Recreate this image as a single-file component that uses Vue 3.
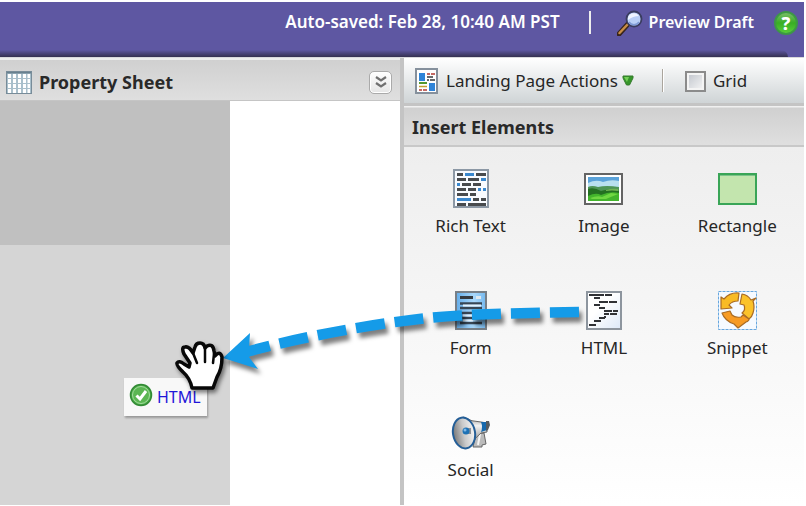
<script setup>
import { ref } from 'vue'

const grid = ref(false)
const elements = ['Rich Text', 'Image', 'Rectangle', 'Form', 'HTML', 'Snippet', 'Social']

const richBars = [
  [4, 4, 6, 0], [12, 4, 9, 1], [23, 4, 10, 0],
  [4, 9, 9, 0], [15, 9, 11, 0], [28, 9, 5, 1],
  [4, 14, 3, 1], [9, 14, 9, 0], [20, 14, 8, 0],
  [4, 19, 9, 0], [15, 19, 8, 0], [25, 19, 3, 1], [30, 19, 3, 1],
  [4, 24, 11, 0], [17, 24, 6, 0],
  [4, 29, 14, 1], [20, 29, 6, 0], [28, 29, 5, 0],
  [4, 34, 9, 0], [15, 34, 18, 0]
]
const htmlBars = [
  [3, 3, 15], [19, 3, 7], [8, 6, 6], [13, 10, 9], [23, 10, 8], [8, 13, 6],
  [13, 16, 6], [18, 19, 8], [27, 19, 5], [18, 22, 5], [24, 22, 7],
  [18, 25, 2], [13, 26, 6], [8, 29, 7], [3, 33, 7]
]
</script>

<template>
  <div class="app">
    <header class="topbar">
      <span class="saved">Auto-saved: Feb 28, 10:40 AM PST</span>
      <span class="bar-sep"></span>
      <a class="preview" href="#preview">
        <svg width="26" height="26" viewBox="0 0 26 26" aria-hidden="true">
          <path d="M2 24 11 14" stroke="#38251b" stroke-width="5" stroke-linecap="round" />
          <path d="M2.500 23 10.500 14.500" stroke="#c98d45" stroke-width="2.500" stroke-linecap="round" />
          <circle cx="17" cy="9" r="7.500" fill="#b9cff6" stroke="#3a3d60" stroke-width="1.800" />
          <path d="M11 10a6 6 0 0 1 11-4q-6 0-11 4" fill="#eff5ff" />
          <path d="M12 12a6 6 0 0 0 10 0" fill="none" stroke="#7f9bd6" stroke-width="1.500" />
        </svg>
        <span>Preview Draft</span>
      </a>
      <button class="help" type="button" aria-label="Help">?</button>
    </header>

    <main class="work">
      <section class="left">
        <div class="panel-head">
          <svg width="26" height="23" viewBox="0 0 26 23" aria-hidden="true">
            <rect x=".5" y=".5" width="25" height="22" fill="#a9bfcb" stroke="#788c99" />
            <path d="M3.500 3v19M8.500 3v19M13.500 3v19M18.500 3v19M22.500 3v19" stroke="#fff" stroke-width="3" />
            <path d="M1 7.500h24M1 12.500h24M1 17.500h24M6 3v19M11 3v19M16 3v19M21 3v19" stroke="#a9bfcb" />
            <path d="M1 1.500h24" stroke="#68808f" stroke-width="2" />
            <rect x=".5" y=".5" width="25" height="22" fill="none" stroke="#788c99" />
          </svg>
          <h2>Property Sheet</h2>
          <button class="collapse" type="button" aria-label="Collapse">
            <svg width="14" height="16" viewBox="0 0 14 16" aria-hidden="true">
              <path d="m2 3 5 3.500L12 3M2 9l5 3.500L12 9" fill="none" stroke="#707070" stroke-width="2.200" />
            </svg>
          </button>
        </div>
        <div class="canvas">
          <div class="page">
            <div class="block"></div>
          </div>
          <div class="drag">
            <svg width="24" height="24" viewBox="0 0 24 24" aria-hidden="true">
              <circle cx="12" cy="12" r="10.500" fill="#4fae49" stroke="#328a35" stroke-width="1.500" />
              <circle cx="12" cy="12" r="8.500" fill="#5bb653" stroke="#a5dda0" />
              <path d="m7.500 12.500 3.500 3.500 6-8" fill="none" stroke="#fff" stroke-width="3" />
            </svg>
            <span>HTML</span>
          </div>
        </div>
      </section>

      <section class="right">
        <div class="toolbar">
          <button class="actions" type="button">
            <svg width="23" height="26" viewBox="0 0 23 26" aria-hidden="true">
              <rect x="1" y="1" width="21" height="24" fill="#fff" stroke="#85909c" stroke-width="2" />
              <path d="M4 5h6v8H4zM14 15h6v8h-6z" fill="#2f84d8" />
              <path d="M12 6h3M16 6h4M4 22h3M8 22h4" stroke="#b33a32" stroke-width="1.500" />
              <path d="M12 9h6M12 12h2M15 12h5" stroke="#363a3d" stroke-width="1.500" />
              <path d="M4 15h8" stroke="#55982e" stroke-width="2" />
              <path d="M4 18.500h8" stroke="#c6a12f" stroke-width="1.500" />
            </svg>
            <span>Landing Page Actions</span>
            <svg width="12" height="11" viewBox="0 0 12 11" aria-hidden="true">
              <path d="M1 1h10v2L7.500 10h-3L1 3z" fill="#36962b" stroke="#347b2d" />
              <path d="M2 2h5L5 7z" fill="#74cf57" />
            </svg>
          </button>
          <span class="tool-sep"></span>
          <label class="grid-toggle"><input v-model="grid" type="checkbox" /><span>Grid</span></label>
        </div>
        <h2 class="insert-head">Insert Elements</h2>
        <div class="palette">
          <button v-for="name in elements" :key="name" class="tile" type="button">
            <span class="pic">
              <svg v-if="name === 'Rich Text'" width="36" height="39" viewBox="0 0 36 39" aria-hidden="true">
                <rect x="1" y="1" width="34" height="37" fill="#f8fbff" stroke="#8c98a5" stroke-width="2" />
                <rect v-for="(b, i) in richBars" :key="i" :x="b[0]" :y="b[1]" :width="b[2]" height="3" :fill="b[3] ? '#3a88ce' : '#484b4e'" />
              </svg>
              <svg v-else-if="name === 'Image'" width="39" height="32" viewBox="0 0 39 32" aria-hidden="true">
                <rect x="1" y="1" width="37" height="30" fill="#fff" stroke="#646464" stroke-width="2" />
                <rect x="4" y="4" width="31" height="24" fill="#5aa2d9" />
                <path d="M4 10q8-4 15-1 8-3 16-1v7H4z" fill="#b9e0ef" />
                <path d="M4 14q4-2 10 0 8-2 21 0v14H4z" fill="#4e9556" />
                <path d="M4 16q6-2 13 2 8-3 18 0v10H4z" fill="#247022" />
                <path d="M4 23q8-4 13-1 9-4 18-2v8H4z" fill="#43b52c" />
                <path d="M6 25q8-3 12-1l9-4 7 1-12 5H8z" fill="#70d742" />
                <path d="M22 17q6-2 12-1v2q-6-1-12 0z" fill="#71b354" />
              </svg>
              <svg v-else-if="name === 'Rectangle'" width="39" height="32" viewBox="0 0 39 32" aria-hidden="true">
                <rect x="1" y="1" width="37" height="30" fill="#c3e5ae" stroke="#39a557" stroke-width="2" />
                <path d="M2 2.500h35" stroke="#7cc288" />
              </svg>
              <svg v-else-if="name === 'Form'" width="32" height="39" viewBox="0 0 32 39" aria-hidden="true">
                <defs><linearGradient id="form-bg"><stop stop-color="#64adea" /><stop offset=".6" stop-color="#a9d8fb" /><stop offset="1" stop-color="#73b8ef" /></linearGradient></defs>
                <rect x="1" y="1" width="30" height="37" fill="url(#form-bg)" stroke="#777f87" stroke-width="2" />
                <path d="M5 6.500h13" stroke="#343a41" stroke-width="3" />
                <path d="M21 6.500h5" stroke="#e0e9ef" stroke-width="3" />
                <path d="M5 12.500h22M5 17h22M5 22h22M5 27h22M5 32h22" stroke="#384654" stroke-width="2.500" />
                <path d="M8 14.500h18M8 24.500h10M8 29.500h10" stroke="#e3f3ff" stroke-width="2" />
              </svg>
              <svg v-else-if="name === 'HTML'" width="36" height="39" viewBox="0 0 36 39" aria-hidden="true">
                <defs><linearGradient id="html-bg" x2="1" y2="1"><stop offset=".4" stop-color="#fff" /><stop offset="1" stop-color="#dce8f8" /></linearGradient></defs>
                <rect x="1" y="1" width="34" height="37" fill="url(#html-bg)" stroke="#8d959e" stroke-width="2" />
                <rect v-for="(b, i) in htmlBars" :key="i" :x="b[0]" :y="b[1]" :width="b[2]" height="2" fill="#303236" />
              </svg>
              <svg v-else-if="name === 'Snippet'" width="39" height="39" viewBox="0 0 39 39" aria-hidden="true">
                <rect x=".5" y=".5" width="38" height="38" fill="#f6faff" stroke="#67a7df" stroke-dasharray="3 1" />
                <g stroke="#a96b24" stroke-width="1.200" stroke-linejoin="round">
                  <path d="M21 2Q12 1 6 8L3 6v12l11-1-3-3q3-4 9-4z" fill="#f9bb24" />
                  <path d="M24 3q6 1 9 6l5-2-3 3q2 6 0 12-1 4-4 6l-7-6q4-3 2-8l-4-1z" fill="#fbc22a" />
                  <path d="M4 22q3 8 12 11l4 4 8-6q3-1 3-3l-6-4-2 2q-6 1-9-2l-2-4z" fill="#f79b24" />
                </g>
              </svg>
              <svg v-else width="40" height="34" viewBox="0 0 40 34" aria-hidden="true">
                <defs>
                  <linearGradient id="horn" y2="1" x2="0"><stop stop-color="#999" /><stop offset=".3" stop-color="#f2f2f2" /><stop offset="1" stop-color="#777" /></linearGradient>
                  <linearGradient id="bell" x2="1"><stop stop-color="#777" /><stop offset=".5" stop-color="#cacaca" /><stop offset="1" stop-color="#f5f5f5" /></linearGradient>
                </defs>
                <path d="m25 18 8-1 2 11-4 1v2h-9z" fill="#bbb" stroke="#666" />
                <path d="m29 18-2 11" stroke="#f5f5f5" stroke-width="2" />
                <path d="M12 1q9 5 18 5l6 1v9l-6 1q-6 4-10 13z" fill="url(#horn)" stroke="#666" />
                <path d="M30 6h6v8l-6 2q2-5 0-10z" fill="#1769ad" />
                <path d="M35 5h3l1 4-2 5-2 1z" fill="#555b60" />
                <ellipse cx="13" cy="17" rx="11" ry="15.500" transform="rotate(-10 13 17)" fill="url(#bell)" stroke="#245e97" stroke-width="2" />
                <path d="M15 12h5v6h-5z" fill="#8c9299" />
                <circle cx="15" cy="15" r="3.500" fill="#1e72b5" /><circle cx="14" cy="14" r="1.500" fill="#82bae7" />
              </svg>
            </span>
            <span>{{ name }}</span>
          </button>
        </div>
      </section>
    </main>

    <svg class="gesture" width="430" height="100" viewBox="170 300 430 100" aria-hidden="true">
      <g class="arrow">
        <path d="M579 312C520 313 470 314 433 317.500S320 332 246 352" fill="none" stroke="#159be8" stroke-width="10.500" stroke-dasharray="29 10" />
        <path d="m223 358 27-25-1 16 5 2-5 6 9 12z" fill="#159be8" />
      </g>
      <g class="hand" stroke="#080808" stroke-width="3.500" stroke-linejoin="round" stroke-linecap="round">
        <path d="M192 388Q190 378 183 372Q176 365 177 363Q179 360 184 364L189 367L190 363L184 354Q181 347 185 347Q189 346 193 353L195 347Q196 343 200 343Q204 343 205 348L207 346Q213 343 214 351L215 356Q220 350 222 357Q222 369 217 377L213 388Z" fill="#fff" />
        <path d="m193 353 4 10M205 348v14M214 354l-1 9" fill="none" stroke-width="2.500" />
      </g>
    </svg>
  </div>
</template>

<style>
body { margin: 0; background: #fff; }
</style>

<style scoped>
.app {
  position: relative;
  box-sizing: border-box;
  display: flex;
  flex-direction: column;
  min-height: 100vh;
  padding: 2px 2px 1px 0;
  font: 17px/24px "Noto Sans", sans-serif;
  color: #262626;
}
.app * { box-sizing: border-box; }
button { margin: 0; padding: 0; border: 0; background: none; font: inherit; color: inherit; }
svg { display: block; flex: none; }
h2 { margin: 0; font-size: 18px; line-height: 24px; font-weight: 700; color: #292929; }

.topbar {
  position: relative;
  display: flex;
  justify-content: flex-end;
  height: 55px;
  padding: 8px 6px 0 0;
  background: #5e57a2;
  font-size: 16px;
  font-weight: 600;
  color: #fff;
}
.topbar::after {
  content: "";
  position: absolute;
  inset: auto 16px 0 0;
  height: 7px;
  border-radius: 0 8px 0 0;
  background: linear-gradient(#5e57a200, #343050);
}
.saved { font-size: 17px; }
.bar-sep { width: 2px; height: 23px; margin: 1px 26px 0 29px; background: #eee; }
.preview { display: flex; gap: 6px; color: #fff; text-decoration: none; }
.help {
  width: 24px;
  height: 24px;
  margin: 1px 0 0 20px;
  border: 2px solid #3d9845;
  border-radius: 50%;
  background: linear-gradient(#77bd66, #39ae24 50%, #58cf38);
  font-size: 18px;
  line-height: 20px;
  font-weight: 800;
  color: #fff;
}

.work { display: flex; flex: 1; border-top: 1px solid #d9d9dc; }
.left { display: flex; flex: 1; flex-direction: column; border-right: 4px solid #c4c4c4; }
.panel-head {
  display: flex;
  align-items: center;
  height: 43px;
  padding: 4px 8px 0 6px;
  gap: 7px;
  border-top: 2px solid #ededed;
  border-bottom: 1px solid #c5c5c5;
  background: linear-gradient(#d0d0d0, #dfdfdf);
}
.collapse {
  display: grid;
  place-items: center;
  width: 23px;
  height: 23px;
  margin-left: auto;
  border: 1px solid #aaa;
  border-radius: 5px;
  background: linear-gradient(#fff, #e5e5e5);
  box-shadow: inset 0 0 0 1px #fff;
}
.canvas { position: relative; flex: 1; display: flex; background: #fff; }
.page { width: 230px; background: #d5d5d5; }
.block { height: 144px; background: #c0c0c0; }
.drag {
  position: absolute;
  top: 277px;
  left: 124px;
  display: flex;
  gap: 4px;
  width: 83px;
  height: 38px;
  padding: 5px 0 0 5px;
  background: #f8f8f8;
  box-shadow: 1px 2px 2px #999;
  font-size: 16px;
  color: #1f16d8;
}
.drag span { padding-top: 2px; }

.right { display: flex; flex: 1; flex-direction: column; }
.toolbar {
  display: flex;
  align-items: center;
  height: 45px;
  padding: 0 12px 0 11px;
  background: linear-gradient(#fff, #cfd4d6);
}
.actions { display: flex; align-items: center; gap: 8px; }
.actions svg:last-child { margin-left: -4px; }
.tool-sep { width: 2px; height: 23px; margin: 0 21px 0 28px; background: #aaa59d; border-right: 1px solid #fff; }
.grid-toggle { display: flex; align-items: center; gap: 7px; }
.grid-toggle input {
  appearance: none;
  width: 21px;
  height: 21px;
  margin: 2px 0 0;
  border: 2px solid #8b8b8b;
  background: linear-gradient(135deg, #bfc3cb, #f7f7f7);
  box-shadow: inset 0 0 0 2px #f4f4f4;
}
.insert-head {
  height: 44px;
  padding: 9px 8px 0;
  border-top: 3px solid #c4c4c4;
  border-bottom: 2px solid #c8c8c8;
  background: linear-gradient(#f0f0f0 1px, #d0d0d0 2px, #dfdfdf);
}
.palette {
  display: grid;
  flex: 1;
  grid-template-columns: repeat(3, 1fr);
  grid-template-rows: 122px 122px 1fr;
  align-items: start;
  padding-top: 20px;
  background: linear-gradient(#eee, #fff);
}
.tile { display: flex; flex-direction: column; align-items: center; gap: 4px; }
.pic { display: flex; align-items: center; height: 43px; }

.gesture { position: absolute; top: 300px; left: 170px; pointer-events: none; }
.arrow { filter: drop-shadow(3px 5px 2px #00000080); }
.hand { filter: drop-shadow(2px 3px 2px #00000080); }
</style>
